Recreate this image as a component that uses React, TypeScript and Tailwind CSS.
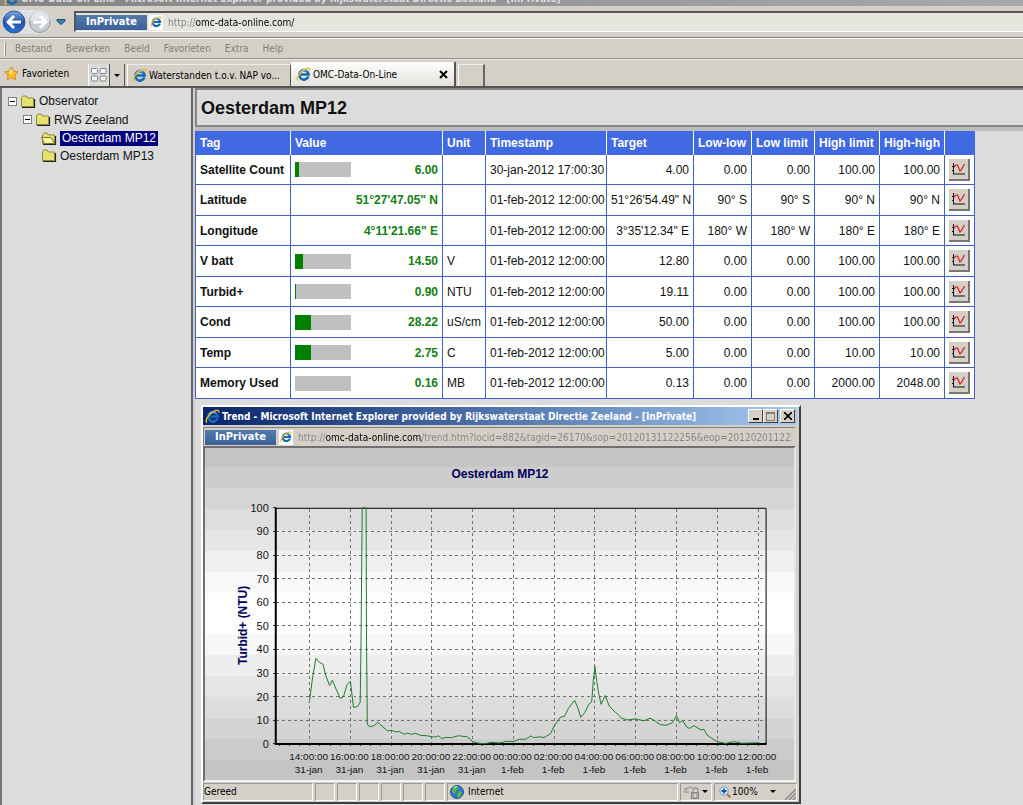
import type { ReactNode } from "react";

interface TagRow {
    tag: string;
    value: string;
    fill: number | null;
    unit: string;
    timestamp: string;
    target: string;
    limits: string[];
}

const NOON = "01-feb-2012 12:00:00";

const rows: TagRow[] = [
    { tag: "Satellite Count", value: "6.00", fill: 7, unit: "", timestamp: "30-jan-2012 17:00:30", target: "4.00", limits: ["0.00", "0.00", "100.00", "100.00"] },
    { tag: "Latitude", value: "51°27'47.05\" N", fill: null, unit: "", timestamp: NOON, target: "51°26'54.49\" N", limits: ["90° S", "90° S", "90° N", "90° N"] },
    { tag: "Longitude", value: "4°11'21.66\" E", fill: null, unit: "", timestamp: NOON, target: "3°35'12.34\" E", limits: ["180° W", "180° W", "180° E", "180° E"] },
    { tag: "V batt", value: "14.50", fill: 15, unit: "V", timestamp: NOON, target: "12.80", limits: ["0.00", "0.00", "100.00", "100.00"] },
    { tag: "Turbid+", value: "0.90", fill: 2, unit: "NTU", timestamp: NOON, target: "19.11", limits: ["0.00", "0.00", "100.00", "100.00"] },
    { tag: "Cond", value: "28.22", fill: 28, unit: "uS/cm", timestamp: NOON, target: "50.00", limits: ["0.00", "0.00", "100.00", "100.00"] },
    { tag: "Temp", value: "2.75", fill: 28, unit: "C", timestamp: NOON, target: "5.00", limits: ["0.00", "0.00", "10.00", "10.00"] },
    { tag: "Memory Used", value: "0.16", fill: 0, unit: "MB", timestamp: NOON, target: "0.13", limits: ["0.00", "0.00", "2000.00", "2048.00"] },
];

const headers = ["Tag", "Value", "Unit", "Timestamp", "Target", "Low-low", "Low limit", "High limit", "High-high"];

// [hours after 14:00, NTU]
const trend = [
    [0, 18.7], [0.15, 28.5], [0.31, 36.3], [0.47, 34.6], [0.65, 33.8], [0.8, 28.8], [0.98, 24.7], [1.11, 27], [1.3, 23.2],
    [1.5, 19.3], [1.66, 20], [1.83, 25], [2, 26.6], [2.15, 15.5], [2.35, 15.8], [2.48, 17.7], [2.52, 43], [2.58, 100],
    [2.77, 100], [2.79, 44], [2.83, 8.2], [2.97, 7.3], [3.18, 7.8], [3.33, 9.2], [3.55, 7.6], [3.82, 5.5], [4.03, 5.8],
    [4.2, 5.1], [4.4, 5.3], [4.64, 4.1], [4.8, 4.6], [4.98, 4.1], [5.2, 4.5], [5.42, 3.7], [5.83, 3.4], [5.98, 3], [6.2, 3],
    [6.33, 3.5], [6.48, 2.3], [6.68, 2.8], [6.97, 2.7], [7.3, 3.5], [7.75, 3], [8, 1], [8.3, 0.3], [8.6, 0.1], [8.9, 0.7],
    [9.3, 0.4], [9.67, 1.1], [10, 1.1], [10.3, 2], [10.6, 2], [10.85, 3.4], [11, 2.7], [11.3, 3], [11.5, 2.7], [11.8, 4.2],
    [12, 7.6], [12.3, 11.3], [12.5, 11.7], [12.7, 15.1], [13, 18.5], [13.17, 15.1], [13.3, 11.3], [13.5, 13.3], [13.7, 16.8],
    [13.84, 17.8], [13.92, 27], [14, 32.8], [14.08, 27], [14.18, 21.5], [14.3, 16.8], [14.5, 20.5], [14.7, 16.1], [15, 13.4],
    [15.13, 12.6], [15.3, 10.9], [15.6, 10.2], [16, 10.6], [16.4, 9.8], [16.7, 10.9], [16.9, 10], [17.2, 8.2], [17.5, 7.9],
    [17.8, 9], [18, 12], [18.15, 9], [18.3, 9.9], [18.5, 7.2], [18.64, 6.6], [18.86, 7.8], [19.2, 5.9], [19.35, 6.2],
    [19.5, 3.8], [19.8, 2], [20, 1.1], [20.4, 0.2], [20.8, 1], [21.2, 0.3], [22, 0.5],
];

const timeLabels = ["14", "16", "18", "20", "22", "00", "02", "04", "06", "08", "10", "12"];

const bands = [
    "#c5c5c5", "#cdcdcd", "#d5d5d5", "#dedede", "#e6e6e6", "#efefef", "#f8f8f8", "#ffffff",
    "#ffffff", "#f7f7f7", "#eeeeee", "#e5e5e5", "#dddddd", "#d4d4d4", "#cbcbcb", "#c4c4c4",
];

const IeIcon = ({ className = "size-[15px]" }: { className?: string }) => (
    <svg viewBox="0 0 16 16" className={`shrink-0 ${className}`} aria-hidden="true">
        <path d="M13.2 10.2a5 5 0 1 1 .3-2.2H5.2" fill="none" stroke="#1668b8" strokeWidth="2.8" />
        <path d="M4 6.2a5 5 0 0 1 8-1.6" fill="none" stroke="#5db4ee" strokeWidth="1.2" />
        <path d="M2.2 14.6C-.6 12.6 4 5.6 9 2.8c4-2.2 6.4-1.8 5.6 1.2" fill="none" stroke="#eebc2c" strokeWidth="1.5" />
    </svg>
);

const PageIcon = () => (
    <span className="flex h-[15px] w-[14px] shrink-0 items-center justify-center bg-white">
        <IeIcon className="size-[12px]" />
    </span>
);

const Folder = ({ open = false }: { open?: boolean }) => (
    <svg viewBox="0 0 16 13" className="h-[13px] w-[16px] shrink-0" aria-hidden="true">
        <path d="M2 12.5h12.5V4" fill="none" stroke="#222" strokeWidth="1.2" />
        <path d="M1.5 11.5v-9l1.5-1.5h3l1.5 2h6v8.5z" fill="#e6e272" stroke="#8b8a3c" />
        {open && <path d="M3.5 11.5l-3-6h9.5l3.5 6z" fill="#f6f3a4" stroke="#77762f" />}
    </svg>
);

const Expander = () => (
    <button aria-label="Collapse" className="flex size-[9px] shrink-0 items-center justify-center border border-[#808080] bg-white">
        <span className="h-px w-[5px] bg-black" />
    </button>
);

const TrendIcon = () => (
    <svg viewBox="0 0 14 14" className="size-[14px]" aria-hidden="true">
        <path d="M1.5 1v11M0 4.5h2M0 8.5h2M1 12h12" fill="none" stroke="#111" />
        <path d="M2 5l2-2h1.5l2.5 6 1.5-1.500L12.500 2" fill="none" stroke="#d81818" strokeWidth="1.2" />
    </svg>
);

const InPrivate = () => (
    <span className="flex h-[15px] w-[71px] shrink-0 items-center justify-center bg-linear-to-b from-[#5379ad] to-[#3b6297] text-[11px] font-bold text-white">
        InPrivate
    </span>
);

const Caret = () => <span className="border-x-[3px] border-t-[3px] border-x-transparent border-t-black" />;

const WindowButton = ({ label, children }: { label: string; children: ReactNode }) => (
    <button
        aria-label={label}
        className="flex h-[14px] w-[15px] items-center justify-center border border-t-white border-r-[#404040] border-b-[#404040] border-l-white bg-[#d4d0c8]"
    >
        {children}
    </button>
);

const TrendChart = () => {
    const xAt = (hours: number) => 105 + hours * 20.45;
    const yAt = (ntu: number) => 297 - ntu * 2.37;

    return (
        <svg viewBox="0 0 591 333" className="block w-full font-['Liberation_Sans',Arial,sans-serif]" role="img" aria-label="Turbid+ trend">
            {bands.map((color, i) => (
                <rect key={i} x="0" y={i * 21 - 2} width="591" height="21.5" fill={color} />
            ))}

            {/* Grid and axes */}
            <g stroke="#707070" strokeDasharray="3 3" shapeRendering="crispEdges">
                {timeLabels.map((hour, i) => (
                    <line key={hour} x1={xAt(i * 2)} x2={xAt(i * 2)} y1="61" y2="297" />
                ))}
                {[10, 20, 30, 40, 50, 60, 70, 80, 90].map((v) => (
                    <line key={v} x1="71" x2="562" y1={yAt(v)} y2={yAt(v)} />
                ))}
            </g>
            <g stroke="#333" shapeRendering="crispEdges">
                {Array.from({ length: 48 }, (_, i) => (
                    <line key={i} x1={xAt(i / 2 - 1.5)} x2={xAt(i / 2 - 1.5)} y1="297" y2="299" />
                ))}
                {Array.from({ length: 11 }, (_, i) => (
                    <line key={i} x1="68" x2="71" y1={yAt(i * 10)} y2={yAt(i * 10)} />
                ))}
            </g>
            <path d="M71 60.5H563V297" fill="none" stroke="#000" />
            <path d="M71 60V297H563.5" fill="none" stroke="#000" strokeWidth="2" />
            <polyline points={trend.map(([h, v]) => `${xAt(h)},${yAt(v)}`).join(" ")} fill="none" stroke="#1e7d2a" />

            <text x="296" y="30" textAnchor="middle" fontSize="12" fontWeight="bold" fill="#00005a">Oesterdam MP12</text>
            <text x="42" y="178" transform="rotate(-90 42 178)" textAnchor="middle" fontSize="12" fontWeight="bold" fill="#00005a">
                Turbid+ (NTU)
            </text>
            <g fontSize="11" fill="#111" textAnchor="end">
                {Array.from({ length: 11 }, (_, i) => (
                    <text key={i} x="64" y={yAt(i * 10) + 4}>{i * 10}</text>
                ))}
            </g>
            <g fontSize="10" fill="#111" textAnchor="middle">
                {timeLabels.map((hour, i) => (
                    <g key={hour}>
                        <text x={xAt(i * 2) - 1} y="313">{hour}:00:00</text>
                        <text x={xAt(i * 2) - 1} y="326">{i < 5 ? "31-jan" : "1-feb"}</text>
                    </g>
                ))}
            </g>
        </svg>
    );
};

const BrowserChrome = () => (
    <header className="bg-[#d4d0c8]">
        <div className="flex h-[6px] items-end overflow-hidden bg-linear-to-r from-[#858585] to-[#a6aaaa]">
            <div className="flex items-center gap-[2px] pl-1 text-[10px] leading-[14px] font-bold whitespace-nowrap text-[#dedede]">
                <IeIcon />
                OMC-Data-On-Line - Microsoft Internet Explorer provided by Rijkswaterstaat Directie Zeeland - [InPrivate]
            </div>
        </div>

        {/* Address bar */}
        <div className="flex h-[32px] items-center border-b border-[#808080] pl-[2px]">
            <div className="flex items-center gap-[2px] rounded-full bg-[#dfe0e0]">
                <button aria-label="Back">
                    <svg viewBox="0 0 24 24" className="size-[24px]">
                        <defs>
                            <linearGradient id="back" x2="0" y2="1">
                                <stop offset="0" stopColor="#86a8df" />
                                <stop offset=".5" stopColor="#1f4fae" />
                                <stop offset="1" stopColor="#2a77d8" />
                            </linearGradient>
                        </defs>
                        <circle cx="12" cy="12" r="11" fill="url(#back)" stroke="#33558f" />
                        <path d="M19 12H7M12 6l-6 6 6 6" fill="none" stroke="#fff" strokeWidth="3" />
                    </svg>
                </button>
                <button aria-label="Forward">
                    <svg viewBox="0 0 24 24" className="size-[24px]">
                        <circle cx="12" cy="12" r="10.5" fill="#c6ccd3" stroke="#8f979f" />
                        <path d="M2 11a10 10 0 0 1 20 0c-5-2-14-2-20 0z" fill="#e3e6ea" />
                        <path d="M5 12h12M12 6l6 6-6 6" fill="none" stroke="#fff" strokeWidth="3" />
                    </svg>
                </button>
            </div>
            <button aria-label="Recent pages" className="mr-[8px] ml-[4px]">
                <svg viewBox="0 0 10 6" className="h-[6px] w-[10px]">
                    <path d="M1 .5h8v1.5L5 5.5 1 2z" fill="#3685b5" stroke="#1e4b70" />
                </svg>
            </button>
            <div className="flex h-[21px] flex-1 items-center gap-[2px] border-t-2 border-b border-l-2 border-t-[#555] border-b-white border-l-[#555] bg-[#e6e5dd]">
                <InPrivate />
                <PageIcon />
                <input
                    aria-label="Address"
                    defaultValue="http://omc-data-online.com/"
                    className="ml-[3px] min-w-0 flex-1 bg-[linear-gradient(90deg,#808080_28px,#000_28px)] bg-clip-text text-[10px] text-transparent outline-none"
                />
            </div>
        </div>

        <nav className="flex h-[21px] items-center gap-[14px] border-t border-b border-t-white border-b-[#909090] pl-[4px] text-[10px] text-[#808078]">
            <span className="-mr-[5px] h-[14px] w-[2px] border-r border-[#909090] bg-white" />
            {["Bestand", "Bewerken", "Beeld", "Favorieten", "Extra", "Help"].map((item) => (
                <button key={item}>{item}</button>
            ))}
        </nav>

        {/* Favourites and tabs */}
        <div className="flex h-[29px] items-end border-t border-b-2 border-t-[#e8e6e2] border-b-[#555] text-[10px] text-black">
            <button className="flex h-[26px] w-[88px] items-center gap-[3px] pl-[4px]">
                <svg viewBox="0 0 16 16" className="size-[15px]">
                    <path d="M8 1l2.2 4.6 5 .7-3.6 3.5.9 5L8 12.4 3.5 14.8l.9-5L.8 6.3l5-.7z" fill="#f9bc2a" stroke="#d18a1b" />
                    <path d="M8 3l1.3 3.5L8 9 5 7z" fill="#ffe48c" />
                </svg>
                Favorieten
            </button>
            <button aria-label="Quick tabs" className="flex h-[22px] w-[22px] items-center justify-center border-r border-l border-l-white border-r-[#555] bg-[#dcdad5]">
                <svg viewBox="0 0 16 14" className="h-[14px] w-[16px]" fill="#f4f5f8" stroke="#7f8492">
                    <rect x=".5" y=".5" width="6" height="5" rx="1" />
                    <rect x="9" y=".5" width="6" height="5" rx="1" />
                    <rect x=".5" y="8" width="6" height="5" rx="1" />
                    <rect x="9" y="8" width="6" height="5" rx="1" />
                </svg>
            </button>
            <button aria-label="Tab list" className="flex h-[22px] w-[15px] items-center justify-center border-r border-[#555]">
                <Caret />
            </button>
            <div role="tablist" className="flex items-end">
                <button role="tab" aria-selected="false" className="ml-[2px] flex h-[22px] w-[164px] items-center gap-[2px] border-t border-r border-l border-t-[#eee] border-r-[#555] border-l-white pl-[4px] whitespace-nowrap">
                    <IeIcon />
                    Waterstanden t.o.v. NAP vo...
                </button>
                <div className="flex h-[24px] w-[165px] items-center border-r-2 border-[#555] bg-linear-to-b from-white to-[#e4e2dd] pr-[6px] pl-[5px]">
                    <button role="tab" aria-selected="true" className="flex flex-1 items-center gap-[2px]">
                        <IeIcon />
                        OMC-Data-On-Line
                    </button>
                    <button aria-label="Close tab">
                        <svg viewBox="0 0 9 9" className="size-[9px]">
                            <path d="M1 1l7 7M8 1L1 8" stroke="#000" strokeWidth="2" />
                        </svg>
                    </button>
                </div>
                <button aria-label="New tab" className="ml-[2px] h-[22px] w-[27px] border-t border-r-2 border-l border-t-[#eee] border-r-[#666] border-l-white" />
            </div>
        </div>
    </header>
);

const Tree = () => (
    <aside className="w-[193px] shrink-0 border-r-2 border-l-2 border-r-[#666] border-l-[#777] pt-[4px] pl-[6px] text-[12px] text-[#111]">
        <div className="flex h-[18px] items-center gap-[3px]">
            <Expander />
            <Folder />
            <a href="#observator">Observator</a>
        </div>
        <div className="flex h-[19px] items-center gap-[3px] pl-[15px]">
            <Expander />
            <Folder />
            <a href="#zeeland">RWS Zeeland</a>
        </div>
        <div className="flex h-[18px] items-center gap-[3px] pl-[33px]">
            <Folder open />
            <a href="#mp12" className="bg-[#00007b] px-[2px] leading-[15px] text-white">Oesterdam MP12</a>
        </div>
        <div className="flex h-[17px] items-center gap-[3px] pl-[33px]">
            <Folder />
            <a href="#mp13">Oesterdam MP13</a>
        </div>
    </aside>
);

const TagTable = () => (
    <table className="w-[779px] table-fixed border-separate border-spacing-0 border-l border-[#4060c8] bg-white text-[12px] leading-[16px] whitespace-nowrap text-[#111]">
        <colgroup>
            <col className="w-[95px]" />
            <col className="w-[152px]" />
            <col className="w-[43px]" />
            <col className="w-[121px]" />
            <col className="w-[87px]" />
            <col className="w-[58px]" />
            <col className="w-[63px]" />
            <col className="w-[65px]" />
            <col className="w-[65px]" />
            <col className="w-[30px]" />
        </colgroup>
        <thead>
            <tr className="h-[24px] bg-[#4169e1] text-left text-white">
                {headers.map((header) => (
                    <th key={header} className="border-r border-white px-[4px]">{header}</th>
                ))}
                <td />
            </tr>
        </thead>
        <tbody>
            {rows.map((row) => (
                <tr
                    key={row.tag}
                    className="h-[30px] even:h-[31px] *:border-r *:border-b *:border-[#4060c8] *:px-[4px]"
                >
                    <th className="text-left">{row.tag}</th>
                    <td>
                        <div className="flex items-center justify-between font-bold text-[#128012]">
                            <span className="flex h-[15px] w-[56px]">
                                {row.fill !== null && (
                                    <span className="flex-1 bg-[#c0c0c0]">
                                        <span className="block h-full bg-[#008000]" style={{ width: `${row.fill}%` }} />
                                    </span>
                                )}
                            </span>
                            {row.value}
                        </div>
                    </td>
                    <td>{row.unit}</td>
                    <td>{row.timestamp}</td>
                    <td className="text-right">{row.target}</td>
                    {row.limits.map((limit, i) => (
                        <td key={i} className="text-right">{limit}</td>
                    ))}
                    <td>
                        <button
                            aria-label={`Trend ${row.tag}`}
                            className="flex h-[22px] w-[21px] items-center justify-center border-r-2 border-b-2 border-[#777] bg-[#d4d0c8]"
                        >
                            <TrendIcon />
                        </button>
                    </td>
                </tr>
            ))}
        </tbody>
    </table>
);

const TrendWindow = () => (
    <section className="mt-[6px] ml-[6px] w-[600px] border-2 border-t-white border-r-[#404040] border-b-[#404040] border-l-white bg-[#d4d0c8] pr-[2px] text-[10px] text-black">
        <div className="flex h-[18px] items-center gap-[2px] bg-linear-to-r from-[#0a246a] to-[#a6caf0] pr-[2px] pl-[2px] font-bold whitespace-nowrap text-white">
            <IeIcon />
            <h2 className="flex-1">Trend - Microsoft Internet Explorer provided by Rijkswaterstaat Directie Zeeland - [InPrivate]</h2>
            <div className="flex">
                <WindowButton label="Minimize">
                    <span className="mt-[6px] h-[2px] w-[6px] bg-black" />
                </WindowButton>
                <WindowButton label="Maximize">
                    <span className="h-[9px] w-[9px] border border-t-2 border-[#808080]" />
                </WindowButton>
                <span className="w-[2px]" />
                <WindowButton label="Close">
                    <svg viewBox="0 0 8 8" className="size-[8px]">
                        <path d="M0 0l8 8M8 0L0 8" stroke="#000" strokeWidth="1.7" />
                    </svg>
                </WindowButton>
            </div>
        </div>

        <div className="mt-[2px] mr-[2px] flex h-[19px] items-center gap-[3px] border-t border-l border-t-[#808080] border-l-[#808080] pl-[1px]">
            <InPrivate />
            <PageIcon />
            <input
                aria-label="Address"
                defaultValue="http://omc-data-online.com/trend.htm?locid=882&tagid=26170&sop=20120131122256&eop=20120201122256"
                className="mr-[3px] ml-[2px] min-w-0 flex-1 bg-[linear-gradient(90deg,#858585_28px,#000_28px,#000_124px,#858585_124px)] bg-clip-text text-[10px] text-transparent outline-none"
            />
        </div>

        <div className="mr-[1px] border-2 border-t-[#707070] border-r-[#e8e6e2] border-b-[#f4f4f4] border-l-[#707070]">
            <TrendChart />
        </div>

        {/* Status bar */}
        <footer className="flex h-[20px] items-stretch gap-[2px] py-[1px] *:border *:border-t-[#999] *:border-r-white *:border-b-white *:border-l-[#999]">
            <span className="w-[110px]">Gereed</span>
            {[0, 1, 2, 3, 4, 5].map((n) => (
                <span key={n} className="w-[20px]" />
            ))}
            <span className="flex flex-1 items-center gap-[4px] pl-[2px]">
                <svg viewBox="0 0 14 14" className="size-[14px]">
                    <circle cx="7" cy="7" r="6.5" fill="#2d78c8" stroke="#1f5797" />
                    <path d="M3 2l4-1 2 2-3 3-1 3-3-2zM9 6l3 1-1 4-3 2-1-3z" fill="#58b64c" />
                    <path d="M4 2.5l3-1" stroke="#cfeaff" />
                </svg>
                Internet
            </span>
            <button aria-label="Protected mode" className="flex w-[32px] items-center justify-between px-[3px]">
                <svg viewBox="0 0 16 14" className="h-[14px] w-[16px]">
                    <path d="M1 7c1-4 5-6 8-4M1 3v4h4" fill="none" stroke="#aaa" strokeWidth="2" />
                    <path d="M9 8V5.5a2.5 2.5 0 0 1 5 0V8" fill="none" stroke="#999" strokeWidth="1.5" />
                    <rect x="7.5" y="7.5" width="7" height="6" fill="#a8a8a8" stroke="#888" />
                    <path d="M11 9v3" stroke="#fff" />
                </svg>
                <Caret />
            </button>
            <div className="flex w-[83px] items-center">
                <button className="flex flex-1 items-center gap-[1px] pl-[4px]">
                    <svg viewBox="0 0 12 12" className="size-[12px]">
                        <path d="M7.5 7.5l4 4" stroke="#b9733c" strokeWidth="2" />
                        <circle cx="5" cy="5" r="4.2" fill="#d5e9fb" stroke="#6c9acb" />
                        <path d="M5 2.5v5M2.5 5h5" stroke="#1b55a8" strokeWidth="1.8" />
                    </svg>
                    <span className="flex-1 text-left">100%</span>
                    <Caret />
                </button>
                <svg viewBox="0 0 12 12" className="mt-[4px] ml-[8px] size-[12px]">
                    <path d="M1 12L12 1M5 12l7-7M9 12l3-3" stroke="#808080" strokeWidth="1.3" />
                </svg>
            </div>
        </footer>
    </section>
);

export default function App() {
    return (
        <div className="flex min-h-screen flex-col bg-[#dcdcdc] font-['DejaVu_Sans_Condensed','DejaVu_Sans',sans-serif]">
            <BrowserChrome />
            <div className="flex flex-1">
                <div className="flex font-['Liberation_Sans',Arial,sans-serif]">
                    <Tree />
                </div>
                <main className="min-w-0 flex-1 border-l-2 border-[#d0d0d0]">
                    <div className="border-b-4 border-[#bcbcbc] font-['Liberation_Sans',Arial,sans-serif]">
                        <h1 className="flex h-[39px] items-center border-t-2 border-b-2 border-l-2 border-[#858585] pt-[2px] pl-[4px] text-[18px] font-bold text-[#111]">
                            Oesterdam MP12
                        </h1>
                    </div>
                    <div className="font-['Liberation_Sans',Arial,sans-serif]">
                        <TagTable />
                    </div>
                    <TrendWindow />
                </main>
            </div>
        </div>
    );
}
